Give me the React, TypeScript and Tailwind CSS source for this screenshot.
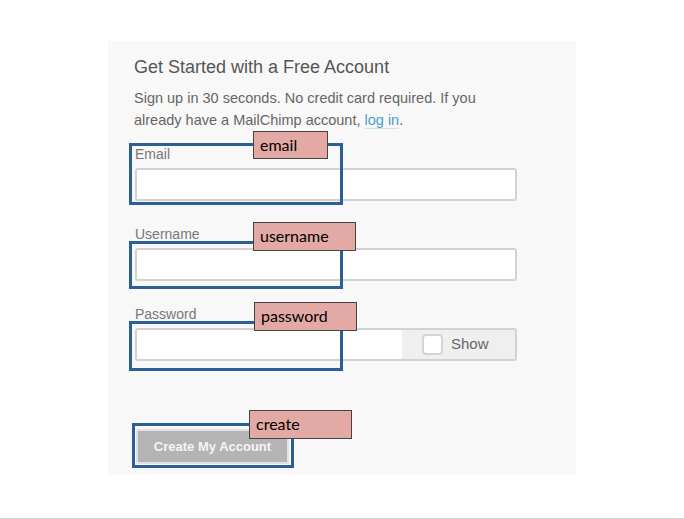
import React from "react";

const Field = ({ label, children }: { label: string; children: React.ReactNode }) => (
  <div>
    <div className="text-[14px] leading-[18px] text-[#777]">{label}</div>
    <div className="mt-[5px]">{children}</div>
  </div>
);

const Note = ({
  text,
  box,
  tag,
}: {
  text: string;
  box: string;
  tag: string;
}) => (
  <>
    <div className={`absolute border-[3px] border-[#2b5f96] ${box}`} />
    <div
      className={`absolute border border-[#444] bg-[#e3a9a4] pl-[6px] text-[16px] leading-[25px] text-black ${tag}`}
      style={{ fontFamily: "Lato, 'Open Sans', sans-serif" }}
    >
      {text}
    </div>
  </>
);

export default function App() {
  return (
    <div
      className="relative h-[519px] w-[684px] overflow-hidden bg-white"
      style={{ fontFamily: "'Liberation Sans', Arial, sans-serif" }}
    >
      <div className="ml-[108px] mt-[41px] h-[434px] w-[468px] bg-[#f8f8f8] pl-[26px] pr-[59px] pt-[14px]">
        <h1 className="text-[18px] leading-6 text-[#555]">Get Started with a Free Account</h1>
        <p className="mt-2 max-w-[350px] text-[14.5px] leading-[22px] text-[#666]">
          Sign up in 30 seconds. No credit card required. If you already have a MailChimp account,{" "}
          <span className="border-b border-[#cfe3ee] text-[#4d9cc6]">log in</span>.
        </p>

        <div className="mt-[14px] flex flex-col gap-[24px] pl-px">
          <Field label="Email">
            <div className="h-[33px] rounded-[3px] border-2 border-[#d2d2d2] bg-white" />
          </Field>
          <Field label="Username">
            <div className="h-[33px] rounded-[3px] border-2 border-[#d2d2d2] bg-white" />
          </Field>
          <Field label="Password">
            <div className="flex h-[33px] overflow-hidden rounded-[3px] border-2 border-[#d2d2d2] bg-white">
              <div className="flex-1" />
              <div className="flex w-[113px] items-center gap-2 bg-[#efefef] pl-[20px]">
                <div className="h-[21px] w-[21px] rounded-[4px] border-2 border-[#d4d4d4] bg-white" />
                <span className="text-[15px] text-[#666]">Show</span>
              </div>
            </div>
          </Field>
        </div>

        <div className="mt-[68px] pl-[2px]">
          <button className="h-[35px] w-[153px] rounded-[2px] border-2 border-[#e2e2e2] bg-[#b4b4b4] text-[13px] font-bold text-[#f4f4f4]">
            Create My Account
          </button>
        </div>
      </div>

      <div className="absolute bottom-0 left-0 h-px w-full bg-[#d0d0d0]" />

      <Note text="email" box="left-[129px] top-[143px] h-[62px] w-[214px]" tag="left-[253px] top-[131px] h-[28px] w-[75px]" />
      <Note text="username" box="left-[129px] top-[241px] h-[48px] w-[214px]" tag="left-[253px] top-[222px] h-[29px] w-[103px]" />
      <Note text="password" box="left-[129px] top-[321px] h-[50px] w-[214px]" tag="left-[254px] top-[302px] h-[29px] w-[103px]" />
      <Note text="create" box="left-[132px] top-[423px] h-[45px] w-[162px]" tag="left-[249px] top-[410px] h-[29px] w-[103px]" />
    </div>
  );
}
